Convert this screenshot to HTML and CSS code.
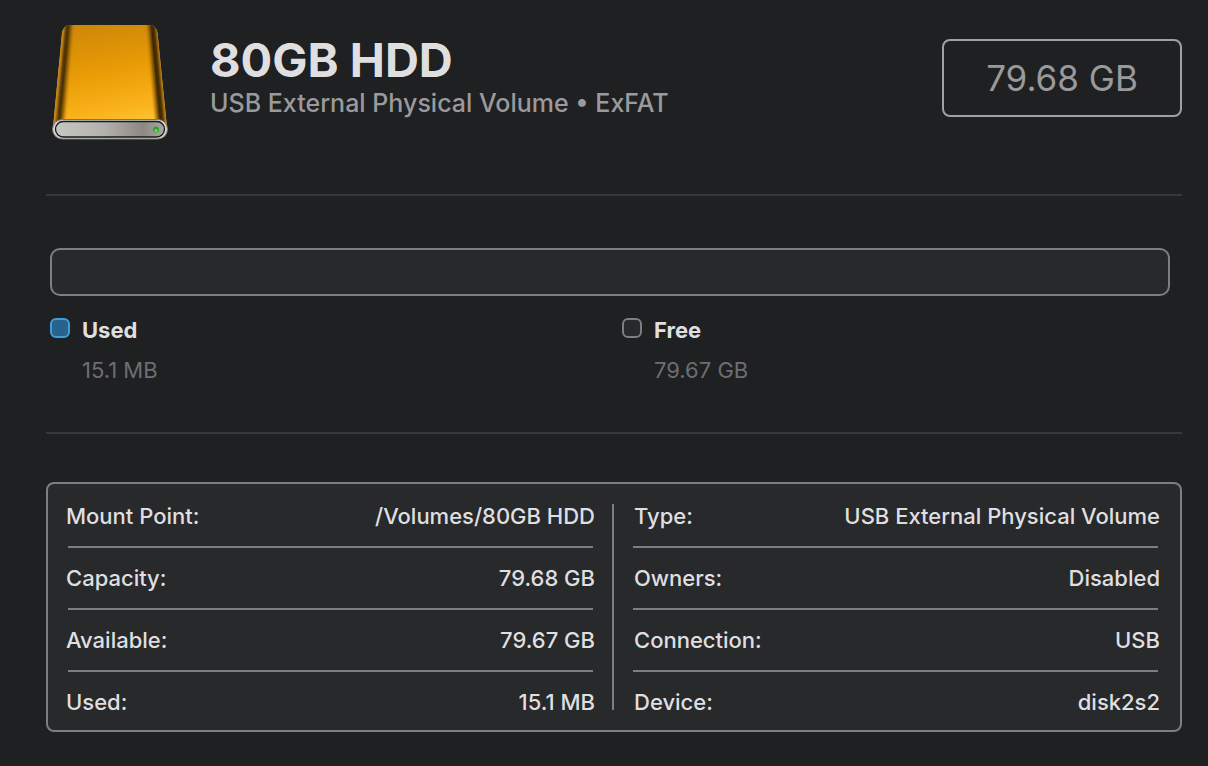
FILE: index.html
```html
<!DOCTYPE html>
<html lang="en">
<head>
<meta charset="utf-8">
<title>80GB HDD</title>
<meta name="viewport" content="width=device-width, initial-scale=1">
<link rel="stylesheet" href="styles.css">
</head>
<body>
<main class="page">
  <header class="volume">
    <svg class="volume-icon" viewBox="0 0 120 120" aria-hidden="true">
      <defs>
        <linearGradient id="body" x1="0.3" y1="0" x2="0.5" y2="1">
          <stop offset="0" stop-color="#cf8708"/>
          <stop offset="0.45" stop-color="#e99c06"/>
          <stop offset="0.8" stop-color="#fbb31c"/>
          <stop offset="1" stop-color="#ffc93c"/>
        </linearGradient>
        <linearGradient id="left" gradientUnits="userSpaceOnUse" x1="7.5" y1="55" x2="20.5" y2="56.2">
          <stop offset="0" stop-color="#d08f22"/>
          <stop offset="0.14" stop-color="#b87b14"/>
          <stop offset="0.32" stop-color="#5a3b06"/>
          <stop offset="0.48" stop-color="#4a3003"/>
          <stop offset="0.7" stop-color="#8a5a04" stop-opacity="0.8"/>
          <stop offset="1" stop-color="#c98508" stop-opacity="0"/>
        </linearGradient>
        <linearGradient id="right" gradientUnits="userSpaceOnUse" x1="112.5" y1="55" x2="99.5" y2="56.2">
          <stop offset="0" stop-color="#c98a20"/>
          <stop offset="0.12" stop-color="#a06a10"/>
          <stop offset="0.3" stop-color="#4a3003"/>
          <stop offset="0.48" stop-color="#3c2703"/>
          <stop offset="0.7" stop-color="#8a5a04" stop-opacity="0.8"/>
          <stop offset="1" stop-color="#c98508" stop-opacity="0"/>
        </linearGradient>
        <linearGradient id="front" x1="0" y1="0" x2="1" y2="0">
          <stop offset="0" stop-color="#c6c6c2"/>
          <stop offset="0.45" stop-color="#b3b1ad"/>
          <stop offset="0.8" stop-color="#8e8883"/>
          <stop offset="1" stop-color="#aaa6a2"/>
        </linearGradient>
      </defs>
      <path id="shell" d="M20 3H100Q106 3 107.500 11L117 106Q117 112 108 112H12Q3 112 3 106L12 11Q13.500 3 20 3Z" fill="url(#body)"/>
      <path d="M20 3H60V112H12Q3 112 3 106L12 11Q13.500 3 20 3Z" fill="url(#left)"/>
      <path d="M100 3H60V112H108Q117 112 117 106L107.500 11Q106 3 100 3Z" fill="url(#right)"/>
      <rect x="2.500" y="97.500" width="115" height="19.500" rx="9.700" fill="#d6d6d3" stroke="#777673" stroke-width="1"/>
      <rect x="5.500" y="99.500" width="109" height="15.500" rx="7.700" fill="url(#front)" stroke="#18191a" stroke-width="1.300"/>
      <circle cx="106" cy="107.500" r="3" fill="#2aa52b"/>
      <circle cx="106" cy="108.500" r="1.500" fill="#62e65a"/>
    </svg>
    <div class="volume-text">
      <h1 class="volume-name">80GB HDD</h1>
      <p class="volume-kind">USB External Physical Volume • ExFAT</p>
    </div>
    <div class="volume-size">79.68 GB</div>
  </header>

  <section class="usage" aria-label="Usage">
    <div class="usage-bar"></div>
    <dl class="legend">
      <div class="legend-item">
        <dt class="legend-name"><span class="swatch swatch-used"></span>Used</dt>
        <dd class="legend-value">15.1 MB</dd>
      </div>
      <div class="legend-item">
        <dt class="legend-name"><span class="swatch"></span>Free</dt>
        <dd class="legend-value">79.67 GB</dd>
      </div>
    </dl>
  </section>

  <section class="details" aria-label="Details">
    <dl class="column">
      <div class="row"><dt>Mount Point:</dt><dd>/Volumes/80GB HDD</dd></div>
      <div class="row"><dt>Capacity:</dt><dd>79.68 GB</dd></div>
      <div class="row"><dt>Available:</dt><dd>79.67 GB</dd></div>
      <div class="row"><dt>Used:</dt><dd>15.1 MB</dd></div>
    </dl>
    <div class="divider"></div>
    <dl class="column column-device">
      <div class="row"><dt>Type:</dt><dd>USB External Physical Volume</dd></div>
      <div class="row"><dt>Owners:</dt><dd>Disabled</dd></div>
      <div class="row"><dt>Connection:</dt><dd>USB</dd></div>
      <div class="row"><dt>Device:</dt><dd>disk2s2</dd></div>
    </dl>
  </section>
</main>
</body>
</html>
```
FILE: styles.css
```css
* {
  box-sizing: border-box;
}

body {
  margin: 0;
  background: #1f2022;
  color: #dfdfe0;
  font-family: Inter, "Liberation Sans", sans-serif;
}

h1,
p,
dl,
dd {
  margin: 0;
}

.page {
  padding: 22px 26px 34px 46px;
}

.volume {
  display: flex;
  align-items: flex-start;
  gap: 40px;
  padding: 0 0 52px 4px;
  border-bottom: 2px solid #37383a;
}

.volume-icon {
  flex: none;
  width: 120px;
  height: 120px;
}

.volume-text {
  flex: 1;
  padding-top: 11px;
}

.volume-name {
  font-size: 47px;
  line-height: 54px;
  font-weight: 700;
}

.volume-kind {
  color: #9a9a9c;
  font-size: 25px;
  font-weight: 500;
  line-height: 32px;
}

.volume-size {
  min-width: 240px;
  margin-top: 17px;
  padding: 15px 20px;
  border: 2px solid #a0a1a3;
  border-radius: 8px;
  color: #9a9a9c;
  font-size: 35px;
  font-weight: 400;
  line-height: 44px;
  text-align: center;
}

.usage {
  padding: 52px 12px 46px 4px;
  border-bottom: 2px solid #37383a;
}

.usage-bar {
  height: 48px;
  border: 2px solid #7d7e80;
  border-radius: 10px;
  background: #28292b;
}

.legend {
  display: grid;
  grid-template-columns: 1fr 1fr;
  gap: 24px;
  padding-top: 18px;
}

.legend-name {
  display: flex;
  align-items: center;
  gap: 12px;
  font-size: 22px;
  font-weight: 700;
  line-height: 32px;
}

.swatch {
  width: 20px;
  height: 20px;
  margin-bottom: 4px;
  border: 2px solid #7d7e80;
  border-radius: 6px;
  background: #28292b;
}

.swatch-used {
  border-color: #3e9fda;
  background: #27638c;
}

.legend-value {
  padding: 8px 0 0 32px;
  color: #6d6e70;
  font-size: 22px;
  line-height: 32px;
}

.details {
  display: flex;
  gap: 17px;
  margin-top: 48px;
  padding: 0 20px 0 18px;
  border: 2px solid #7d7e80;
  border-radius: 8px;
  background: #28292b;
}

.column {
  flex: 1;
  padding-top: 2px;
}

.column-device dt {
  padding-left: 3px;
}

.divider {
  width: 2px;
  margin: 20px 0;
  background: #7d7e80;
}

.row {
  display: flex;
  justify-content: space-between;
  gap: 16px;
  padding: 15px 0 17px;
  background: linear-gradient(#7d7e80, #7d7e80) center bottom / calc(100% - 4px) 2px no-repeat;
  font-size: 22px;
  font-weight: 500;
  line-height: 30px;
}

.row:last-child {
  padding-bottom: 13px;
  background: none;
}
```
